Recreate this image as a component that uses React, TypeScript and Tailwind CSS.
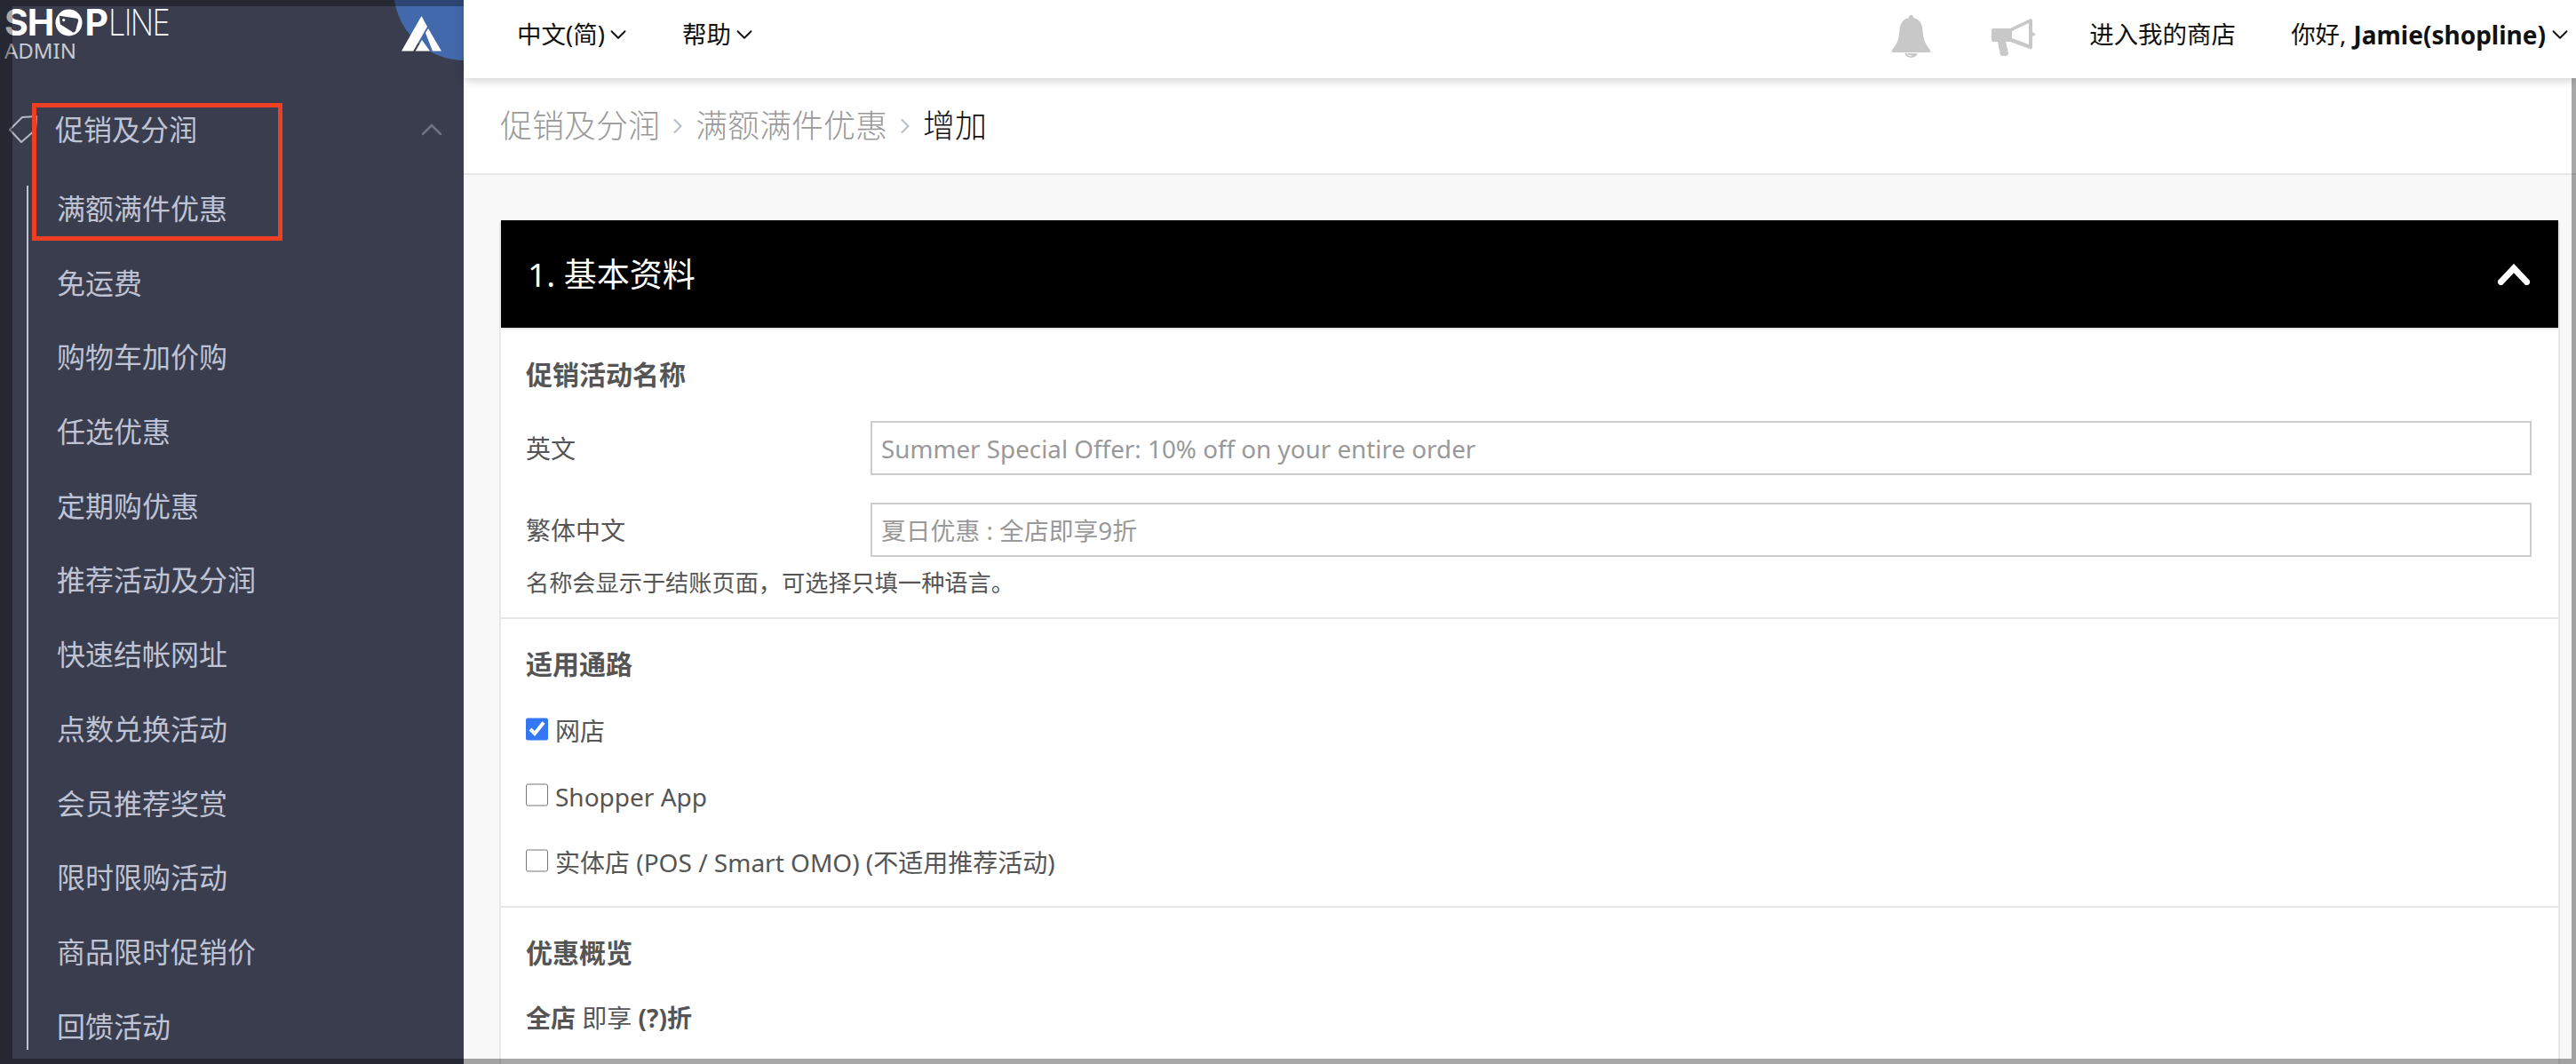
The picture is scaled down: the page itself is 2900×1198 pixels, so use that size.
import { ChevronDown, ChevronRight, ChevronUp } from 'lucide-react'

const subMenu = [
  '满额满件优惠',
  '免运费',
  '购物车加价购',
  '任选优惠',
  '定期购优惠',
  '推荐活动及分润',
  '快速结帐网址',
  '点数兑换活动',
  '会员推荐奖赏',
  '限时限购活动',
  '商品限时促销价',
  '回馈活动',
]

function Logo() {
  return (
    <div className="pl-[5px] pt-[4px]">
      <div className="flex h-[42px] items-center font-['Inter',sans-serif] text-[41px] leading-none text-white">
        <span className="font-bold tracking-[-1px]">SH</span>
        <svg viewBox="0 0 32 32" className="mx-[2px] h-[31px] w-[31px]">
          <circle cx="16" cy="16" r="15.5" fill="#fff" />
          <path d="M5 8 L25 11 Q27 11 27 14 L24 25 Q23 28 20 27 L6 18 Z" fill="#393d4e" />
          <circle cx="10" cy="13" r="1.6" fill="#fff" />
          <path d="M7 19 L20 27 M8 22 L18 28" stroke="#fff" strokeWidth="0.7" />
        </svg>
        <span className="font-bold">P</span>
        <span className="origin-left scale-x-[0.84] font-extralight tracking-[-2px]">LINE</span>
      </div>
      <div className="text-[24px] leading-[22px] text-[#c9cbd2]">ADMIN</div>
    </div>
  )
}

function MountainMark() {
  return (
    <div className="absolute top-[-92px] left-[443px] h-[160px] w-[160px] rounded-full bg-[#4369ad]">
      <svg viewBox="0 0 45 40" className="absolute top-[110px] left-[9px] h-[40px] w-[45px]">
        <path d="M22.5 0 L29 12 L13.3 39.5 L0 39.5 Z" fill="#fff" />
        <path d="M27 19 L30 14 L45 39.5 L35 39.5 Z" fill="#fff" />
        <path d="M23 27 L15.7 39.5 L32 39.5 Z" fill="#fff" />
      </svg>
    </div>
  )
}

function Sidebar() {
  return (
    <aside className="relative h-full w-[522px] shrink-0 overflow-hidden bg-[#393d4e] text-[#bfc3d3]">
      <MountainMark />
      <div className="h-[104px]">
        <Logo />
      </div>
      <div className="flex h-[84px] items-center pr-[16px] pl-[10px]">
        <svg viewBox="0 0 33 32" className="h-[32px] w-[33px]" fill="none" stroke="#b5b9c6" strokeWidth="2">
          <path d="M1 16 L15 2 L31 1 L30 16 L14 30 Z" strokeLinejoin="round" />
        </svg>
        <span className="ml-[19px] text-[32px] leading-none">促销及分润</span>
        <ChevronUp className="ml-auto h-[40px] w-[40px] text-[#6f7382]" strokeWidth={1.5} />
      </div>
      <ul className="mt-[21px] ml-[30px] flex flex-col gap-[31.7px] border-l-2 border-[#bfc3d3] pl-[32px]">
        {subMenu.map((item) => (
          <li key={item} className="flex h-[52px] items-center text-[32px] leading-none">
            {item}
          </li>
        ))}
      </ul>
    </aside>
  )
}

function BellIcon() {
  return (
    <svg viewBox="0 0 45 48" className="h-[48px] w-[45px]" fill="#c8c8c8">
      <circle cx="22.5" cy="2.5" r="2.5" />
      <path d="M22.5 3 C14 3 10 9 9.5 17 C9 28 6 33 1 39.5 Q0 42 2 42 L43 42 Q45 42 44 39.5 C39 33 36 28 35.5 17 C35 9 31 3 22.5 3 Z" />
      <path d="M15.5 43 A7 5 0 0 0 29.5 43 Z" />
      <path d="M18 43.5 Q19 46 23 46" fill="none" stroke="#fff" strokeWidth="1" />
    </svg>
  )
}

function HornIcon() {
  return (
    <svg viewBox="0 0 51 43" className="h-[43px] w-[51px]" fill="#c8c8c8">
      <path
        fillRule="evenodd"
        d="M3 11 L22 11 L44 0.5 Q47 -0.5 47 2 L47 15 L51 17.5 L47 20 L47 32 Q47 35 44 34 L22 26 L17 26 L20 39 Q20 42 16 42 L13 42 Q11 42 10.5 39 L8 26 L3 26 Q1 26 1 23 L1 14 Q1 11 3 11 Z M24 14 L24 22 L43 29 L43 5 Z"
      />
    </svg>
  )
}

function TopBar() {
  return (
    <header className="relative z-10 flex h-[88px] items-center bg-white pr-[3px] pl-[60px] text-[27.5px] text-[#111] shadow-[0_3px_10px_rgba(0,0,0,0.18)]">
      <div className="mt-[-10px] flex w-[186px] items-center">
        中文(简)
        <ChevronDown className="h-[30px] w-[30px]" strokeWidth={1.5} />
      </div>
      <div className="mt-[-10px] flex items-center">
        帮助
        <ChevronDown className="h-[30px] w-[30px]" strokeWidth={1.5} />
      </div>
      <div className="mt-[-6px] ml-auto flex items-center">
        <BellIcon />
      </div>
      <div className="mt-[-4px] ml-[67px] flex items-center">
        <HornIcon />
      </div>
      <span className="mt-[-10px] ml-[60px]">进入我的商店</span>
      <div className="mt-[-10px] ml-[62px] flex items-center">
        你好,<span className="ml-[8px] text-[28px] font-bold">Jamie(shopline)</span>
        <ChevronDown className="ml-[1px] h-[30px] w-[30px]" strokeWidth={1.5} />
      </div>
    </header>
  )
}

function Breadcrumb() {
  return (
    <div className="flex h-[109px] items-center border-b-2 border-[#e6e6e6] bg-white pl-[41px] text-[36px] leading-none font-light text-[#999]">
      <span>促销及分润</span>
      <ChevronRight className="mx-[6px] h-[28px] w-[28px] text-[#b8bdc9]" strokeWidth={1.75} />
      <span>满额满件优惠</span>
      <ChevronRight className="mx-[6px] h-[28px] w-[28px] text-[#b8bdc9]" strokeWidth={1.75} />
      <span className="text-[#111]">增加</span>
    </div>
  )
}

function NameRow({ label, placeholder }: { label: string; placeholder: string }) {
  return (
    <div className="flex items-center">
      <label className="w-[388px] shrink-0 text-[28px]">{label}</label>
      <input
        readOnly
        placeholder={placeholder}
        className="h-[61px] flex-1 border-2 border-[#ccc] bg-white pl-[10px] text-[27.8px] placeholder:text-[#999]"
      />
    </div>
  )
}

function ChannelOption({ label, checked = false }: { label: string; checked?: boolean }) {
  return (
    <label className="flex h-[40px] items-center text-[28px]">
      <input
        type="checkbox"
        readOnly
        checked={checked}
        className="m-0 mb-[4px] h-[26px] w-[25px] shrink-0 accent-[#3477f5]"
      />
      <span className="ml-[8px]">{label}</span>
    </label>
  )
}

function SectionTitle({ children }: { children: string }) {
  return <h3 className="h-[40px] text-[30px] leading-[40px] font-bold">{children}</h3>
}

function BasicInfoCard() {
  return (
    <section className="flex-1 rounded-t-[4px] border-x-2 border-[#e8e8e8] bg-white text-[#555]">
      <div className="flex h-[121px] items-center justify-between bg-black pr-[32px] pl-[30px] text-white">
        <h2 className="text-[37px] leading-none">1. 基本资料</h2>
        <svg viewBox="0 0 36 24" className="h-[24px] w-[36px]" fill="none" stroke="#fff" strokeWidth="7">
          <path d="M3.5 20.5 L18 5 L32.5 20.5" strokeLinecap="square" />
        </svg>
      </div>
      <div className="border-t-2 border-[#e6e6e6] pt-[31px] pr-[30px] pb-[21px] pl-[28px]">
        <SectionTitle>促销活动名称</SectionTitle>
        <div className="mt-[32px] flex flex-col gap-[31px]">
          <NameRow label="英文" placeholder="Summer Special Offer: 10% off on your entire order" />
          <NameRow label="繁体中文" placeholder="夏日优惠 : 全店即享9折" />
        </div>
        <p className="mt-[11px] h-[36px] text-[26.2px] leading-[36px]">名称会显示于结账页面，可选择只填一种语言。</p>
      </div>
      <div className="border-t-2 border-[#e6e6e6] pt-[31px] pb-[29px] pl-[28px]">
        <SectionTitle>适用通路</SectionTitle>
        <div className="mt-[35px] flex flex-col gap-[34px]">
          <ChannelOption label="网店" checked />
          <ChannelOption label="Shopper App" />
          <ChannelOption label="实体店 (POS / Smart OMO) (不适用推荐活动)" />
        </div>
      </div>
      <div className="border-t-2 border-[#e6e6e6] pt-[31px] pl-[28px]">
        <SectionTitle>优惠概览</SectionTitle>
        <p className="mt-[33px] text-[28px] leading-[40px]">
          <b>全店</b> 即享 <b>(?)折</b>
        </p>
      </div>
    </section>
  )
}

export default function App() {
  return (
    <div className="relative flex h-[1198px] w-[2900px] overflow-hidden bg-white font-['Noto_Sans','Noto_Sans_CJK_SC',sans-serif]">
      <Sidebar />
      <main className="flex h-full min-w-0 flex-1 flex-col bg-[#f8f8f8]">
        <TopBar />
        <Breadcrumb />
        <div className="flex flex-1 flex-col pt-[51px] pr-[18px] pl-[40px]">
          <BasicInfoCard />
        </div>
      </main>
      {/* annotation box from the original screenshot */}
      <div className="pointer-events-none absolute top-[116px] left-[36px] h-[155px] w-[282px] border-[5px] border-[#ee3f24]" />
      {/* dim frame around the whole capture */}
      <div className="pointer-events-none absolute inset-0 border-t-[7px] border-r-[5px] border-b-[6px] border-l-[14px] border-black/[0.34]" />
    </div>
  )
}
